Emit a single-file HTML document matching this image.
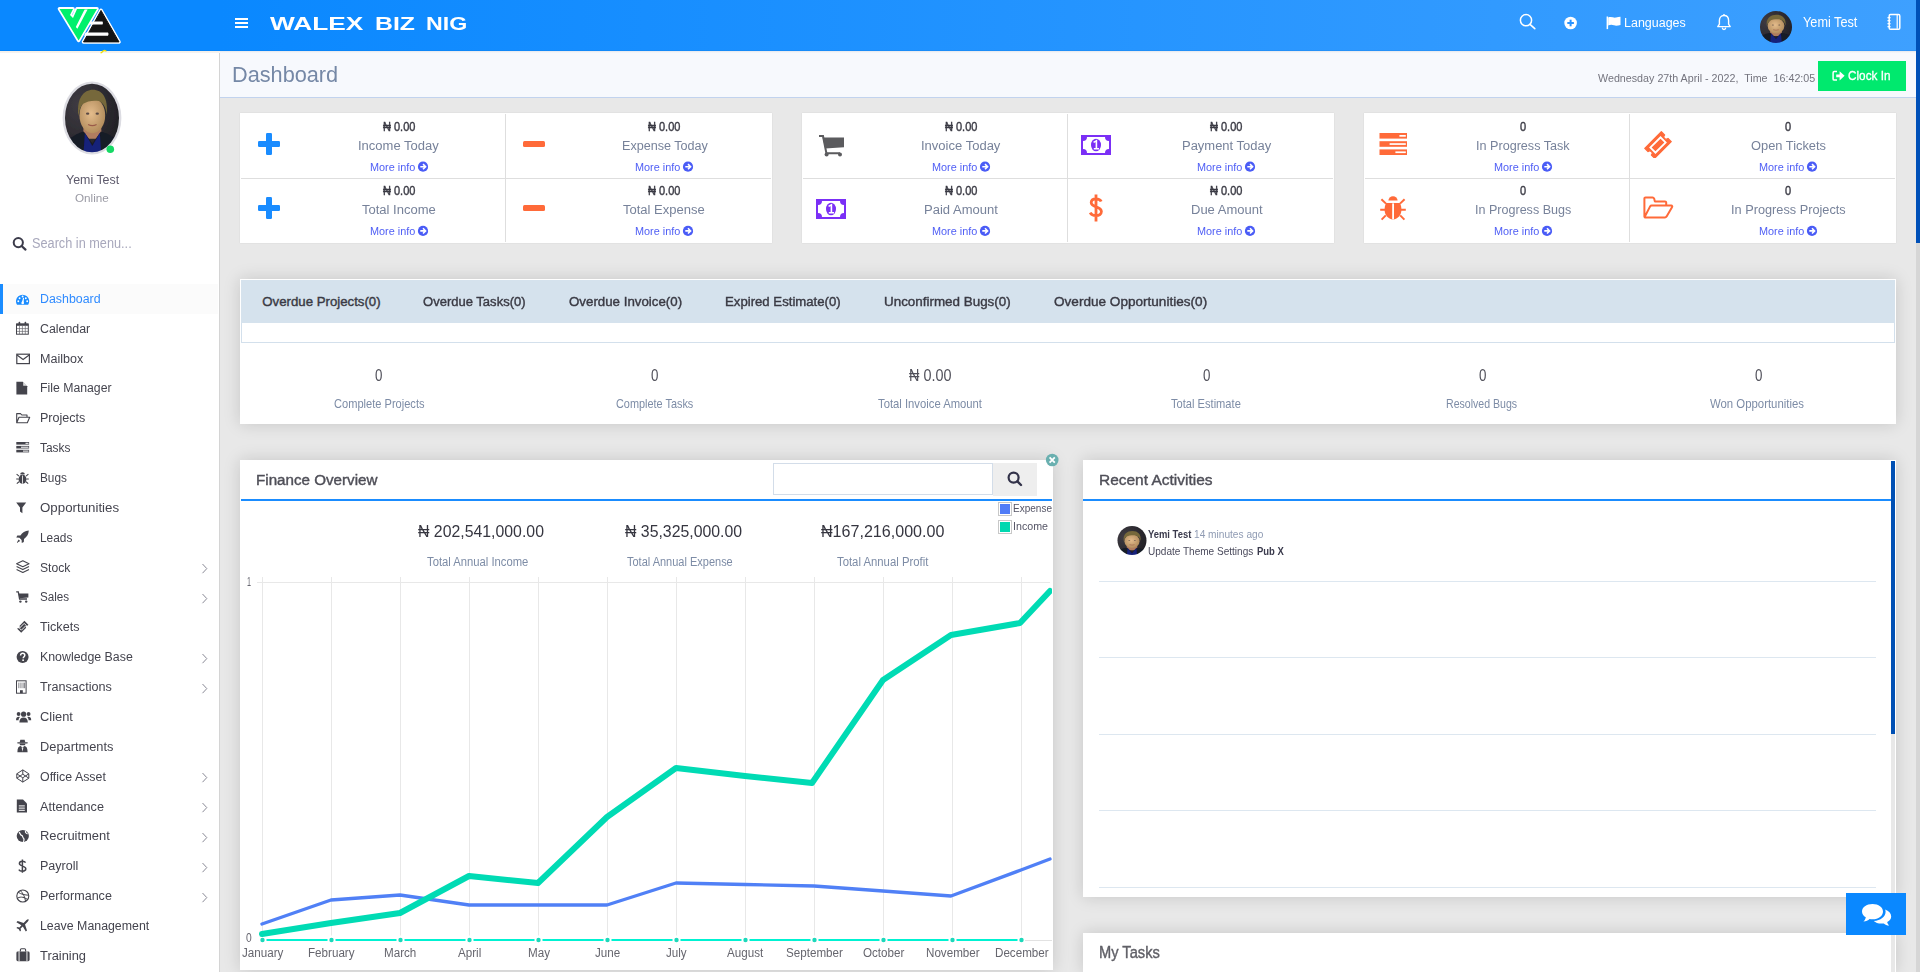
<!DOCTYPE html>
<html><head><meta charset="utf-8"><title>Dashboard</title>
<style>
html,body{margin:0;padding:0;width:1920px;height:972px;overflow:hidden;background:#e8e8e8;font-family:"Liberation Sans",sans-serif;}
.b{position:absolute;display:block}
.t{position:absolute;white-space:pre;line-height:1;transform-origin:0 0;font-family:"Liberation Sans",sans-serif}
</style></head><body>
<div class="b" style="left:220px;top:50px;width:1700px;height:922px;background:#e8e8e8"></div>
<div class="b" style="left:0px;top:51px;width:220px;height:921px;background:#fff;border-right:1px solid #d4d4d4;box-sizing:border-box"></div>
<svg class="b" style="left:60px;top:79px;" width="64" height="78" viewBox="0 0 64 78"><defs><clipPath id="av1"><ellipse cx="32" cy="39" rx="27" ry="34.3"/></clipPath></defs><ellipse cx="32" cy="39" rx="29.4" ry="36.5" fill="#dcdce2"/><g clip-path="url(#av1)"><g transform="translate(-1.9,-7.2) scale(1.07,1.196)"><defs><radialGradient id="bgav1" cx="30%" cy="35%" r="75%"><stop offset="0" stop-color="#3e3b42"/><stop offset="1" stop-color="#1c1b20"/></radialGradient>
<radialGradient id="face1" cx="45%" cy="45%" r="60%"><stop offset="0" stop-color="#e4bc8c"/><stop offset="1" stop-color="#b08a5a"/></radialGradient>
<filter id="bl1" x="-10%" y="-10%" width="120%" height="120%"><feGaussianBlur stdDeviation="0.55"/></filter></defs>
<g filter="url(#bl1)">
<rect x="0" y="0" width="64" height="78" fill="url(#bgav1)"/>
<path d="M24 44 L40 44 L41 56 L23 56 Z" fill="#b07c60"/>
<path d="M0 78 C2 60 12 53 24 50 L32 60 L40 50 C52 53 62 60 64 78 Z" fill="#191a26"/>
<path d="M25 51 L32 62 L39 51 L41 78 L23 78 Z" fill="#16207a"/>
<ellipse cx="32" cy="36.5" rx="12" ry="14.8" fill="url(#face1)"/>
<path d="M19 37 C17 22 24 15 32.5 15 C41.5 15 47 22 45.5 36 C44.5 29 42 26 38 24.4 C33 23.6 27 24.4 23 27 C21 29 19.8 32 19 37 Z" fill="#76683a"/>
<ellipse cx="27.6" cy="35" rx="1.6" ry="0.9" fill="#5a4a44"/><ellipse cx="36.6" cy="35" rx="1.6" ry="0.9" fill="#5a4a44"/>
<path d="M28 44 Q32 46 36 44" stroke="#9a5a4a" stroke-width="1" fill="none"/>
</g></g></g></svg>
<svg class="b" style="left:105px;top:144px;" width="11" height="11" viewBox="0 0 11 11"><circle cx="5.3" cy="5.3" r="3.8" fill="#16d965"/></svg>
<div class="t" style="left:65.70px;top:173.69px;font-size:12.06px;font-weight:400;color:#5d5a6c;transform:scaleX(1.0310);">Yemi Test</div>
<div class="t" style="left:75.40px;top:193.20px;font-size:11.34px;font-weight:400;color:#9a9aa4;transform:scaleX(1.0335);">Online</div>
<svg class="b" style="left:12px;top:236px;" width="16" height="16" viewBox="0 0 16 16"><circle cx="6.3" cy="6.6" r="4.6" fill="none" stroke="#3b3b4a" stroke-width="2"/><line x1="9.6" y1="10" x2="13.5" y2="13.6" stroke="#3b3b4a" stroke-width="2.2" stroke-linecap="round"/></svg>
<div class="t" style="left:31.50px;top:237.01px;font-size:13.81px;font-weight:400;color:#a8a8bc;transform:scaleX(0.9219);">Search in menu...</div>
<div class="b" style="left:0px;top:284px;width:218px;height:30px;background:#fbfbfb"></div>
<div class="b" style="left:0px;top:284px;width:3px;height:30px;background:#1a8cff"></div>
<div class="t" style="left:40.10px;top:291.83px;font-size:13.08px;font-weight:400;color:#2f8bff;transform:scaleX(0.9470);">Dashboard</div>
<svg class="b" style="left:16px;top:292px" width="16" height="15" viewBox="0 0 16 15"><path d="M1 12.8 A6.6 6.6 0 1 1 12.2 12.8 Z" fill="#1a8cff"/><g fill="#fff"><circle cx="3.6" cy="6.2" r="0.95"/><circle cx="6.6" cy="4.5" r="0.95"/><circle cx="9.8" cy="6.2" r="0.95"/><circle cx="2.3" cy="9.2" r="0.95"/><circle cx="11.2" cy="9.2" r="0.95"/><path d="M7.1 5.8 L8 5.9 L7.6 10.6 L5.8 10.6 Z"/><circle cx="6.7" cy="10.9" r="1.3"/></g></svg>
<div class="t" style="left:40.10px;top:321.69px;font-size:13.08px;font-weight:400;color:#44444e;transform:scaleX(0.9464);">Calendar</div>
<svg class="b" style="left:16px;top:321px" width="16" height="15" viewBox="0 0 16 15"><rect x="0.5" y="3" width="11.8" height="10.2" fill="none" stroke="#44444c" stroke-width="1"/><rect x="0.5" y="2.6" width="11.8" height="2.2" fill="#44444c"/><path d="M3.5 5 V13 M6.4 5 V13 M9.3 5 V13 M0.8 7.6 H12 M0.8 10.4 H12" stroke="#44444c" stroke-width="0.7" opacity="0.8"/><rect x="2.6" y="0.8" width="1.6" height="3" rx="0.6" fill="#44444c"/><rect x="8.6" y="0.8" width="1.6" height="3" rx="0.6" fill="#44444c"/></svg>
<div class="t" style="left:40.10px;top:351.55px;font-size:13.08px;font-weight:400;color:#44444e;transform:scaleX(0.9590);">Mailbox</div>
<svg class="b" style="left:16px;top:351px" width="16" height="15" viewBox="0 0 16 15"><rect x="0.8" y="3.2" width="12.6" height="9.4" fill="none" stroke="#44444c" stroke-width="1.2"/><path d="M1 4 L7.1 8.6 L13.2 4" fill="none" stroke="#44444c" stroke-width="1.2"/></svg>
<div class="t" style="left:40.10px;top:381.42px;font-size:13.08px;font-weight:400;color:#44444e;transform:scaleX(0.9379);">File Manager</div>
<svg class="b" style="left:16px;top:381px" width="16" height="15" viewBox="0 0 16 15"><path d="M0.4 0.8 H6.8 L11.2 5.2 V13.6 H0.4 Z" fill="#44444c"/><path d="M7.2 0.8 V4.8 H11.2" fill="#ddd"/></svg>
<div class="t" style="left:40.10px;top:411.28px;font-size:13.08px;font-weight:400;color:#44444e;transform:scaleX(0.9598);">Projects</div>
<svg class="b" style="left:16px;top:411px" width="16" height="15" viewBox="0 0 16 15"><path d="M0.7 11.8 V2.6 H4.5 L5.8 4 H11 V6 M0.7 11.8 L3 6.3 H13.7 L11.3 11.8 Z" fill="none" stroke="#44444c" stroke-width="1.1" stroke-linejoin="round"/></svg>
<div class="t" style="left:40.10px;top:441.14px;font-size:13.08px;font-weight:400;color:#44444e;transform:scaleX(0.9104);">Tasks</div>
<svg class="b" style="left:16px;top:441px" width="16" height="15" viewBox="0 0 16 15"><rect x="0.3" y="1" width="12.8" height="2.6" fill="#44444c"/><rect x="0.3" y="4.9" width="12.8" height="2.6" fill="#44444c"/><rect x="0.3" y="8.8" width="12.8" height="2.6" fill="#44444c"/><rect x="9.5" y="1.8" width="3" height="1" fill="#fff"/><rect x="5" y="5.7" width="7.5" height="1" fill="#fff"/><rect x="7" y="9.6" width="5.5" height="1" fill="#fff"/></svg>
<div class="t" style="left:40.10px;top:471.01px;font-size:13.08px;font-weight:400;color:#44444e;transform:scaleX(0.9012);">Bugs</div>
<svg class="b" style="left:16px;top:471px" width="16" height="15" viewBox="0 0 16 15"><path d="M4 3.2 A2.6 2.6 0 0 1 9 3.2 Z" fill="#44444c"/><ellipse cx="6.5" cy="8.2" rx="3.9" ry="4.6" fill="#44444c"/><path d="M0.6 3.2 L3 5.2 M12.4 3.2 L10 5.2 M0.2 8 H2.6 M12.8 8 H10.4 M0.8 12.6 L3 10.8 M12.2 12.6 L10 10.8" stroke="#44444c" stroke-width="1.1"/><rect x="6.1" y="4.6" width="0.8" height="8" fill="#fff"/></svg>
<div class="t" style="left:40.10px;top:500.87px;font-size:13.08px;font-weight:400;color:#44444e;transform:scaleX(1.0167);">Opportunities</div>
<svg class="b" style="left:16px;top:501px" width="16" height="15" viewBox="0 0 16 15"><path d="M0.2 1.6 H10.2 L6.4 6.4 V12.2 L4 10.4 V6.4 Z" fill="#44444c"/></svg>
<div class="t" style="left:40.10px;top:530.74px;font-size:13.08px;font-weight:400;color:#44444e;transform:scaleX(0.9076);">Leads</div>
<svg class="b" style="left:16px;top:530px" width="16" height="15" viewBox="0 0 16 15"><path d="M12.8 0.6 C9 0.8 6.3 2.6 4.4 5.4 L1.3 5.6 L0.3 7.6 L3.4 7.8 L5.6 10 L5.8 13 L7.8 12 L8 9 C10.8 7 12.6 4.4 12.8 0.6 Z" fill="#44444c"/><path d="M2.6 9.4 L0.6 13 L4.2 11" fill="#44444c"/></svg>
<div class="t" style="left:40.10px;top:560.60px;font-size:13.08px;font-weight:400;color:#44444e;transform:scaleX(0.9299);">Stock</div>
<svg class="b" style="left:16px;top:560px" width="16" height="15" viewBox="0 0 16 15"><path d="M6.8 0.8 L13 3.8 L6.8 6.8 L0.6 3.8 Z M0.6 6.6 L6.8 9.6 L13 6.6 M0.6 9.4 L6.8 12.4 L13 9.4" fill="none" stroke="#44444c" stroke-width="1.1" stroke-linejoin="round"/></svg>
<svg class="b" style="left:200px;top:561.2727272727273px;" width="10" height="16" viewBox="0 0 10 16"><polyline points="2.5,3 6.8,7.6 2.5,12.2" fill="none" stroke="#8a8a96" stroke-width="1"/></svg>
<div class="t" style="left:40.10px;top:590.46px;font-size:13.08px;font-weight:400;color:#44444e;transform:scaleX(0.8916);">Sales</div>
<svg class="b" style="left:16px;top:590px" width="16" height="15" viewBox="0 0 16 15"><path d="M0.2 1.8 H2.3 L3.6 9 H11" fill="none" stroke="#44444c" stroke-width="1.3"/><path d="M2.6 3.4 H12.4 V7.6 L3.4 8.2 Z" fill="#44444c"/><circle cx="4.4" cy="11.6" r="1.2" fill="#44444c"/><circle cx="10.2" cy="11.6" r="1.2" fill="#44444c"/></svg>
<svg class="b" style="left:200px;top:591.1363636363636px;" width="10" height="16" viewBox="0 0 10 16"><polyline points="2.5,3 6.8,7.6 2.5,12.2" fill="none" stroke="#8a8a96" stroke-width="1"/></svg>
<div class="t" style="left:40.10px;top:620.33px;font-size:13.08px;font-weight:400;color:#44444e;transform:scaleX(0.9634);">Tickets</div>
<svg class="b" style="left:16px;top:620px" width="16" height="15" viewBox="0 0 16 15"><path d="M8.4 0.8 L12.4 4.8 L11.6 5.8 C11 5.4 10.2 5.6 10 6.2 C9.6 6.8 9.8 7.4 10.2 7.8 L5.2 12.8 L1.2 8.8 L2 8 C2.6 8.4 3.4 8.2 3.6 7.6 C4 7 3.8 6.4 3.4 6 Z" fill="#44444c"/><path d="M8.2 3.4 L10.2 5.4 L5.4 10.2 L3.4 8.2 Z" fill="none" stroke="#fff" stroke-width="0.9"/></svg>
<div class="t" style="left:40.10px;top:650.19px;font-size:13.08px;font-weight:400;color:#44444e;transform:scaleX(0.9451);">Knowledge Base</div>
<svg class="b" style="left:16px;top:650px" width="16" height="15" viewBox="0 0 16 15"><circle cx="6.6" cy="7" r="6" fill="#44444c"/><path d="M4.6 5.4 C4.6 3.8 5.6 3.2 6.6 3.2 C7.8 3.2 8.8 4 8.8 5.2 C8.8 6.6 7.2 6.8 7.2 8.2" fill="none" stroke="#fff" stroke-width="1.5"/><rect x="6.3" y="9.4" width="1.6" height="1.6" fill="#fff"/></svg>
<svg class="b" style="left:200px;top:650.8636363636364px;" width="10" height="16" viewBox="0 0 10 16"><polyline points="2.5,3 6.8,7.6 2.5,12.2" fill="none" stroke="#8a8a96" stroke-width="1"/></svg>
<div class="t" style="left:40.10px;top:680.05px;font-size:13.08px;font-weight:400;color:#44444e;transform:scaleX(0.9664);">Transactions</div>
<svg class="b" style="left:16px;top:680px" width="16" height="15" viewBox="0 0 16 15"><rect x="0.5" y="0.8" width="9.6" height="12.4" fill="none" stroke="#44444c" stroke-width="1"/><g fill="#44444c" opacity="0.75"><rect x="2.4" y="2.6" width="0.9" height="5.6"/><rect x="4.5" y="2.6" width="0.9" height="5.6"/><rect x="6.6" y="2.6" width="0.9" height="5.6"/><rect x="8.2" y="2.6" width="0.9" height="5.6"/></g><rect x="4" y="10.2" width="2.8" height="3" fill="#44444c"/></svg>
<svg class="b" style="left:200px;top:680.7272727272727px;" width="10" height="16" viewBox="0 0 10 16"><polyline points="2.5,3 6.8,7.6 2.5,12.2" fill="none" stroke="#8a8a96" stroke-width="1"/></svg>
<div class="t" style="left:40.10px;top:709.92px;font-size:13.08px;font-weight:400;color:#44444e;transform:scaleX(0.9821);">Client</div>
<svg class="b" style="left:16px;top:710px" width="16" height="15" viewBox="0 0 16 15"><circle cx="7.6" cy="4.2" r="2.6" fill="#44444c"/><path d="M3.4 12.6 C3.4 9 5 7.4 7.6 7.4 C10.2 7.4 11.8 9 11.8 12.6 Z" fill="#44444c"/><circle cx="2.6" cy="4" r="1.9" fill="#44444c"/><circle cx="12.6" cy="4" r="1.9" fill="#44444c"/><path d="M0 10.2 C0 7.6 1 6.8 3 6.8 L4 7 C3 8 2.6 9 2.6 10.2 Z M15.2 10.2 C15.2 7.6 14.2 6.8 12.2 6.8 L11.2 7 C12.2 8 12.6 9 12.6 10.2 Z" fill="#44444c"/></svg>
<div class="t" style="left:40.10px;top:739.78px;font-size:13.08px;font-weight:400;color:#44444e;transform:scaleX(0.9800);">Departments</div>
<svg class="b" style="left:16px;top:739px" width="16" height="15" viewBox="0 0 16 15"><path d="M3.6 3.4 L4.4 0.8 H8.6 L9.4 3.4 Z" fill="#44444c"/><rect x="1.2" y="3.2" width="10.6" height="1.2" rx="0.6" fill="#44444c"/><path d="M3.6 4.4 H9.4 L9 6.2 H4 Z" fill="#44444c"/><path d="M1.4 13.2 C1.4 9 2.6 7 4.6 7 L6.5 8.6 L8.4 7 C10.4 7 11.6 9 11.6 13.2 Z" fill="#44444c"/><path d="M5.6 8.4 L6.5 12.8 L7.4 8.4" fill="#fff" opacity="0.9"/></svg>
<div class="t" style="left:40.10px;top:769.64px;font-size:13.08px;font-weight:400;color:#44444e;transform:scaleX(0.9476);">Office Asset</div>
<svg class="b" style="left:16px;top:769px" width="16" height="15" viewBox="0 0 16 15"><path d="M6.8 0.9 L12.8 4.8 V9.2 L6.8 13.1 L0.8 9.2 V4.8 Z M0.8 4.8 L6.8 8.8 L12.8 4.8 M0.8 9.2 L6.8 5.2 L12.8 9.2 M6.8 0.9 V5.2 M6.8 8.8 V13.1" fill="none" stroke="#44444c" stroke-width="1" stroke-linejoin="round"/></svg>
<svg class="b" style="left:200px;top:770.3181818181818px;" width="10" height="16" viewBox="0 0 10 16"><polyline points="2.5,3 6.8,7.6 2.5,12.2" fill="none" stroke="#8a8a96" stroke-width="1"/></svg>
<div class="t" style="left:40.10px;top:799.51px;font-size:13.08px;font-weight:400;color:#44444e;transform:scaleX(0.9668);">Attendance</div>
<svg class="b" style="left:16px;top:799px" width="16" height="15" viewBox="0 0 16 15"><path d="M0.8 0.6 H7 L11 4.6 V13.4 H0.8 Z" fill="#44444c"/><g fill="#fff"><rect x="2.8" y="6.4" width="6" height="1"/><rect x="2.8" y="8.6" width="6" height="1"/><rect x="2.8" y="10.8" width="6" height="1"/></g></svg>
<svg class="b" style="left:200px;top:800.1818181818182px;" width="10" height="16" viewBox="0 0 10 16"><polyline points="2.5,3 6.8,7.6 2.5,12.2" fill="none" stroke="#8a8a96" stroke-width="1"/></svg>
<div class="t" style="left:40.10px;top:829.37px;font-size:13.08px;font-weight:400;color:#44444e;transform:scaleX(0.9915);">Recruitment</div>
<svg class="b" style="left:16px;top:829px" width="16" height="15" viewBox="0 0 16 15"><circle cx="6.8" cy="7" r="6.1" fill="#44444c"/><path d="M3 3.2 C4.6 4.6 4 6 5.6 6.4 C7 6.8 6.4 8.6 7.8 9.6 C8.4 10.6 7.8 12 7.2 12.8 M9.6 2 C9 3.2 10 4.6 11.6 4.8" fill="none" stroke="#fff" stroke-width="1.2"/></svg>
<svg class="b" style="left:200px;top:830.0454545454545px;" width="10" height="16" viewBox="0 0 10 16"><polyline points="2.5,3 6.8,7.6 2.5,12.2" fill="none" stroke="#8a8a96" stroke-width="1"/></svg>
<div class="t" style="left:40.10px;top:859.24px;font-size:13.08px;font-weight:400;color:#44444e;transform:scaleX(0.9588);">Payroll</div>
<svg class="b" style="left:16px;top:859px" width="16" height="15" viewBox="0 0 16 15"><path d="M9.6 3.6 C9 2.6 8 2.2 6.4 2.2 C4.6 2.2 3.4 3.2 3.4 4.6 C3.4 7.8 9.8 6.4 9.8 9.8 C9.8 11.2 8.4 12.2 6.4 12.2 C4.6 12.2 3.4 11.6 2.8 10.6 M6.4 0.6 V13.8" fill="none" stroke="#44444c" stroke-width="1.5"/></svg>
<svg class="b" style="left:200px;top:859.9090909090909px;" width="10" height="16" viewBox="0 0 10 16"><polyline points="2.5,3 6.8,7.6 2.5,12.2" fill="none" stroke="#8a8a96" stroke-width="1"/></svg>
<div class="t" style="left:40.10px;top:889.10px;font-size:13.08px;font-weight:400;color:#44444e;transform:scaleX(0.9600);">Performance</div>
<svg class="b" style="left:16px;top:889px" width="16" height="15" viewBox="0 0 16 15"><circle cx="6.8" cy="7" r="6" fill="none" stroke="#44444c" stroke-width="1.1"/><path d="M2 3 C5 5.5 9 6 12.8 6.2 M4.2 1.5 C7 4 9 8 9.6 12.6 M1 9.6 C3.4 7.6 7 7.4 11.8 10.6" fill="none" stroke="#44444c" stroke-width="1"/></svg>
<svg class="b" style="left:200px;top:889.7727272727273px;" width="10" height="16" viewBox="0 0 10 16"><polyline points="2.5,3 6.8,7.6 2.5,12.2" fill="none" stroke="#8a8a96" stroke-width="1"/></svg>
<div class="t" style="left:40.10px;top:918.96px;font-size:13.08px;font-weight:400;color:#44444e;transform:scaleX(0.9447);">Leave Management</div>
<svg class="b" style="left:16px;top:919px" width="16" height="15" viewBox="0 0 16 15"><path d="M12.6 0.4 C11.8 0.2 10.8 0.8 9.8 1.8 L7.6 4 L1.6 2 L0.4 3.2 L5.4 6.2 L3.4 8.4 L1.4 8 L0.4 9 L2.8 10.2 L4 12.6 L5 11.6 L4.6 9.6 L6.8 7.6 L9.8 12.6 L11 11.4 L9 5.4 L11.2 3.2 C12.2 2.2 12.8 1.2 12.6 0.4 Z" fill="#44444c"/></svg>
<div class="t" style="left:40.10px;top:948.83px;font-size:13.08px;font-weight:400;color:#44444e;transform:scaleX(0.9840);">Training</div>
<svg class="b" style="left:16px;top:948px" width="16" height="15" viewBox="0 0 16 15"><rect x="0.4" y="3.6" width="13.2" height="9.6" rx="1.4" fill="#44444c"/><path d="M4.4 3.6 V1.8 C4.4 1.2 4.8 0.8 5.4 0.8 H8.6 C9.2 0.8 9.6 1.2 9.6 1.8 V3.6" fill="none" stroke="#44444c" stroke-width="1.1"/><rect x="2.6" y="3.6" width="0.9" height="9.6" fill="#fff"/><rect x="10.5" y="3.6" width="0.9" height="9.6" fill="#fff"/></svg>
<div class="b" style="left:0px;top:0px;width:220px;height:51px;background:#0a88ff"></div>
<div class="b" style="left:220px;top:0px;width:1700px;height:51px;background:linear-gradient(90deg,#0a88ff 0%,#3ea0ff 100%)"></div>
<div class="b" style="left:0px;top:50px;width:1920px;height:1px;background:linear-gradient(90deg,#0282f8 0%,#3598f8 100%)"></div>
<div class="b" style="left:0px;top:51px;width:220px;height:2px;background:linear-gradient(#f6efe6,#f4f4f4)"></div>
<div class="b" style="left:220px;top:51px;width:1700px;height:1px;background:rgba(120,90,40,.08)"></div>
<svg class="b" style="left:55px;top:5px;" width="70" height="42" viewBox="0 0 70 42"><g transform="translate(0,-0.6)">
<g stroke="#fff" stroke-width="3.6" stroke-linejoin="round" fill="none">
<path d="M46 6 L64 37.5 L28.5 37.5 Z"/>
<path d="M4.5 4.5 L18 4.5 L15 10.5 L18 13.5 L22 4.5 L42 4.5 L23.6 36 Z"/>
</g>
<path d="M46 6 L64 37.5 L28.5 37.5 Z" fill="#141414" stroke="#141414" stroke-width="1" stroke-linejoin="round"/>
<path d="M36 17 L47.5 17 Q48.5 18.5 47.5 20 L34.4 20 Z M30.5 28.2 L53 28.2 Q54.2 29.8 53 31.4 L29 31.4 Z" fill="#fff"/>
<path d="M4.5 4.5 L18 4.5 L15 10.5 L18 13.5 L22 4.5 L42 4.5 L23.6 36 Z" fill="#00f06c"/>
<path d="M29.6 5 L32.6 5 L22.4 24.4 L20.8 22.6 Z" fill="#fff"/>
</g></svg>
<div class="b" style="left:235px;top:18px;width:13px;height:2px;background:#fff"></div>
<div class="b" style="left:235px;top:22px;width:13px;height:2px;background:#fff"></div>
<div class="b" style="left:235px;top:26px;width:13px;height:2px;background:#fff"></div>
<div class="t" style="left:270.10px;top:13.86px;font-size:19.19px;font-weight:700;color:#fff;transform:scaleX(1.3685);">WALEX</div>
<div class="t" style="left:375.00px;top:13.86px;font-size:19.19px;font-weight:700;color:#fff;transform:scaleX(1.2924);">BIZ</div>
<div class="t" style="left:425.80px;top:13.86px;font-size:19.19px;font-weight:700;color:#fff;transform:scaleX(1.2094);">NIG</div>
<svg class="b" style="left:1518px;top:13px;" width="20" height="18" viewBox="0 0 20 18"><circle cx="8" cy="7.2" r="5.6" fill="none" stroke="#fff" stroke-width="1.5"/><line x1="12" y1="11.3" x2="16.8" y2="15.6" stroke="#fff" stroke-width="1.6" stroke-linecap="round"/></svg>
<svg class="b" style="left:1563px;top:16px;" width="16" height="15" viewBox="0 0 16 15"><circle cx="7.6" cy="7" r="6.3" fill="#fff"/><rect x="4.3" y="6" width="6.6" height="2" fill="#2a93ff"/><rect x="6.6" y="3.7" width="2" height="6.6" fill="#2a93ff"/></svg>
<svg class="b" style="left:1606px;top:16px;" width="16" height="14" viewBox="0 0 16 14"><rect x="0.6" y="0.5" width="1.5" height="12.6" fill="#fff"/><path d="M2.2 1.6 C5 0.2 7.5 2.2 10 1.6 C11.5 1.3 13 0.8 14.5 0.8 L14.5 9 C12 9.5 10 10 8 9.3 C6 8.6 4 8.6 2.2 9.6 Z" fill="#fff"/></svg>
<div class="t" style="left:1624.30px;top:16.43px;font-size:13.08px;font-weight:400;color:#fff;transform:scaleX(0.9545);">Languages</div>
<svg class="b" style="left:1715px;top:13px;" width="18" height="18" viewBox="0 0 18 18"><path d="M9 2.5 C5.8 2.5 4.4 5 4.4 7.6 L4.4 11.2 L2.8 13.6 L15.2 13.6 L13.6 11.2 L13.6 7.6 C13.6 5 12.2 2.5 9 2.5 Z" fill="none" stroke="#fff" stroke-width="1.4" stroke-linejoin="round"/><path d="M7.2 14.6 C7.4 16 8.2 16.5 9 16.5 C9.8 16.5 10.6 16 10.8 14.6" fill="none" stroke="#fff" stroke-width="1.3"/><circle cx="9" cy="1.9" r="0.9" fill="#fff"/></svg>
<svg class="b" style="left:1759px;top:10px;" width="34" height="34" viewBox="0 0 34 34"><defs><clipPath id="av2"><circle cx="17" cy="17" r="16"/></clipPath></defs><g clip-path="url(#av2)"><g transform="translate(-5.4,-3.16) scale(0.7,0.52)"><defs><radialGradient id="bgav2" cx="30%" cy="35%" r="75%"><stop offset="0" stop-color="#3e3b42"/><stop offset="1" stop-color="#1c1b20"/></radialGradient>
<radialGradient id="face2" cx="45%" cy="45%" r="60%"><stop offset="0" stop-color="#e4bc8c"/><stop offset="1" stop-color="#b08a5a"/></radialGradient>
<filter id="bl2" x="-10%" y="-10%" width="120%" height="120%"><feGaussianBlur stdDeviation="0.55"/></filter></defs>
<g filter="url(#bl2)">
<rect x="0" y="0" width="64" height="78" fill="url(#bgav2)"/>
<path d="M24 44 L40 44 L41 56 L23 56 Z" fill="#b07c60"/>
<path d="M0 78 C2 60 12 53 24 50 L32 60 L40 50 C52 53 62 60 64 78 Z" fill="#191a26"/>
<path d="M25 51 L32 62 L39 51 L41 78 L23 78 Z" fill="#16207a"/>
<ellipse cx="32" cy="36.5" rx="12" ry="14.8" fill="url(#face2)"/>
<path d="M19 37 C17 22 24 15 32.5 15 C41.5 15 47 22 45.5 36 C44.5 29 42 26 38 24.4 C33 23.6 27 24.4 23 27 C21 29 19.8 32 19 37 Z" fill="#76683a"/>
<ellipse cx="27.6" cy="35" rx="1.6" ry="0.9" fill="#5a4a44"/><ellipse cx="36.6" cy="35" rx="1.6" ry="0.9" fill="#5a4a44"/>
<path d="M28 44 Q32 46 36 44" stroke="#9a5a4a" stroke-width="1" fill="none"/>
</g></g></g></svg>
<div class="t" style="left:1802.60px;top:16.11px;font-size:13.81px;font-weight:400;color:#fff;transform:scaleX(0.9213);">Yemi Test</div>
<svg class="b" style="left:1886px;top:13px;" width="16" height="18" viewBox="0 0 16 18"><rect x="3.2" y="1.6" width="10.6" height="14.6" rx="1.3" fill="none" stroke="#fff" stroke-width="1.5"/><line x1="11.2" y1="2" x2="11.2" y2="15.8" stroke="#fff" stroke-width="1.2"/><g fill="#fff"><rect x="1.5" y="4" width="3" height="1.3"/><rect x="1.5" y="7" width="3" height="1.3"/><rect x="1.5" y="10" width="3" height="1.3"/><rect x="1.5" y="13" width="3" height="1.3"/></g></svg>
<div class="b" style="left:220px;top:51px;width:1700px;height:47px;background:#f7f9fd;border-bottom:1px solid #c2d3ee;box-sizing:border-box"></div>
<div class="b" style="left:220px;top:51px;width:1700px;height:2px;background:linear-gradient(#e6e7ec,#f7f9fd)"></div>
<div class="t" style="left:231.70px;top:63.01px;font-size:22.67px;font-weight:400;color:#7588a6;transform:scaleX(0.9576);">Dashboard</div>
<div class="t" style="left:1597.50px;top:72.93px;font-size:11.19px;font-weight:400;color:#74747e;transform:scaleX(0.9579);">Wednesday 27th April - 2022,  Time  16:42:05</div>
<div class="b" style="left:1818px;top:61px;width:88px;height:30px;background:#00e96e"></div>
<svg class="b" style="left:1831px;top:69px;" width="16" height="13" viewBox="0 0 16 13"><path d="M6 2.6 H3.2 C2.5 2.6 2.1 3 2.1 3.7 V9.9 C2.1 10.6 2.5 11 3.2 11 H6" fill="none" stroke="#fff" stroke-width="1.5"/><path d="M5.2 5.4 H8.6 V2.2 L13.6 6.8 L8.6 11.4 V8.2 H5.2 Z" fill="#fff"/></svg>
<div class="t" style="left:1848.30px;top:69.50px;font-size:12.65px;font-weight:400;color:#fff;transform:scaleX(0.9300);-webkit-text-stroke:0.3px #fff">Clock In</div>
<div class="b" style="left:240px;top:113px;width:532px;height:130px;background:#fff;box-shadow:0 0 1.5px rgba(0,0,0,.1)"></div>
<div class="b" style="left:505px;top:114px;width:1px;height:128px;background:#dedede"></div>
<div class="b" style="left:241px;top:178px;width:530px;height:1px;background:#dedede"></div>
<svg class="b" style="left:258px;top:133px" width="22" height="22" viewBox="0 0 22 22"><rect x="8" y="0" width="6" height="22" rx="1.2" fill="#1a8cff"/><rect x="0" y="8" width="22" height="6" rx="1.2" fill="#1a8cff"/></svg>
<div class="t" style="left:382.59px;top:120.52px;font-size:12.50px;font-weight:400;color:#3a3a44;transform:scaleX(0.8800);-webkit-text-stroke:0.4px currentColor">₦ 0.00</div>
<div class="t" style="left:358.30px;top:139.10px;font-size:13.23px;font-weight:400;color:#77829a;transform:scaleX(0.9848);">Income Today</div>
<div class="t" style="left:369.60px;top:161.80px;font-size:11.34px;font-weight:400;color:#4f5ef5;transform:scaleX(0.9598);">More info</div>
<svg class="b" style="left:417px;top:161px;" width="12" height="12" viewBox="0 0 12 12"><circle cx="6.00" cy="5.70" r="5.1" fill="#4a5cf6"/><path d="M3.30 5.70 h5 M6.00 3.10 l2.6 2.6 l-2.6 2.6" stroke="#fff" stroke-width="1.6" fill="none"/></svg>
<svg class="b" style="left:523px;top:140px" width="22" height="8" viewBox="0 0 22 8"><rect x="0" y="1" width="22" height="6" rx="1.5" fill="#ff6a39"/></svg>
<div class="t" style="left:647.59px;top:120.52px;font-size:12.50px;font-weight:400;color:#3a3a44;transform:scaleX(0.8800);-webkit-text-stroke:0.4px currentColor">₦ 0.00</div>
<div class="t" style="left:621.50px;top:139.10px;font-size:13.23px;font-weight:400;color:#77829a;transform:scaleX(0.9530);">Expense Today</div>
<div class="t" style="left:634.60px;top:161.80px;font-size:11.34px;font-weight:400;color:#4f5ef5;transform:scaleX(0.9598);">More info</div>
<svg class="b" style="left:682px;top:161px;" width="12" height="12" viewBox="0 0 12 12"><circle cx="6.00" cy="5.70" r="5.1" fill="#4a5cf6"/><path d="M3.30 5.70 h5 M6.00 3.10 l2.6 2.6 l-2.6 2.6" stroke="#fff" stroke-width="1.6" fill="none"/></svg>
<svg class="b" style="left:258px;top:197.2px" width="22" height="22" viewBox="0 0 22 22"><rect x="8" y="0" width="6" height="22" rx="1.2" fill="#1a8cff"/><rect x="0" y="8" width="22" height="6" rx="1.2" fill="#1a8cff"/></svg>
<div class="t" style="left:382.59px;top:185.22px;font-size:12.50px;font-weight:400;color:#3a3a44;transform:scaleX(0.8800);-webkit-text-stroke:0.4px currentColor">₦ 0.00</div>
<div class="t" style="left:361.81px;top:202.60px;font-size:13.23px;font-weight:400;color:#77829a;transform:scaleX(0.9850);">Total Income</div>
<div class="t" style="left:369.60px;top:225.70px;font-size:11.34px;font-weight:400;color:#4f5ef5;transform:scaleX(0.9598);">More info</div>
<svg class="b" style="left:417px;top:225px;" width="12" height="12" viewBox="0 0 12 12"><circle cx="6.00" cy="5.90" r="5.1" fill="#4a5cf6"/><path d="M3.30 5.90 h5 M6.00 3.30 l2.6 2.6 l-2.6 2.6" stroke="#fff" stroke-width="1.6" fill="none"/></svg>
<svg class="b" style="left:523px;top:204.2px" width="22" height="8" viewBox="0 0 22 8"><rect x="0" y="1" width="22" height="6" rx="1.5" fill="#ff6a39"/></svg>
<div class="t" style="left:647.59px;top:185.22px;font-size:12.50px;font-weight:400;color:#3a3a44;transform:scaleX(0.8800);-webkit-text-stroke:0.4px currentColor">₦ 0.00</div>
<div class="t" style="left:622.80px;top:202.60px;font-size:13.23px;font-weight:400;color:#77829a;transform:scaleX(0.9850);">Total Expense</div>
<div class="t" style="left:634.60px;top:225.70px;font-size:11.34px;font-weight:400;color:#4f5ef5;transform:scaleX(0.9598);">More info</div>
<svg class="b" style="left:682px;top:225px;" width="12" height="12" viewBox="0 0 12 12"><circle cx="6.00" cy="5.90" r="5.1" fill="#4a5cf6"/><path d="M3.30 5.90 h5 M6.00 3.30 l2.6 2.6 l-2.6 2.6" stroke="#fff" stroke-width="1.6" fill="none"/></svg>
<div class="b" style="left:802px;top:113px;width:532px;height:130px;background:#fff;box-shadow:0 0 1.5px rgba(0,0,0,.1)"></div>
<div class="b" style="left:1067px;top:114px;width:1px;height:128px;background:#dedede"></div>
<div class="b" style="left:803px;top:178px;width:530px;height:1px;background:#dedede"></div>
<svg class="b" style="left:818px;top:134px" width="28" height="24" viewBox="0 0 28 24"><path d="M1 2 H5 L8.4 19.2 H22" fill="none" stroke="#5b5b5e" stroke-width="2"/><path d="M4.6 3.4 H26 V13.2 L7.2 14.6 Z" fill="#5b5b5e"/><circle cx="8.6" cy="20.6" r="2" fill="#5b5b5e"/><circle cx="22" cy="20.6" r="2" fill="#5b5b5e"/></svg>
<div class="t" style="left:944.59px;top:120.52px;font-size:12.50px;font-weight:400;color:#3a3a44;transform:scaleX(0.8800);-webkit-text-stroke:0.4px currentColor">₦ 0.00</div>
<div class="t" style="left:921.01px;top:139.10px;font-size:13.23px;font-weight:400;color:#77829a;transform:scaleX(0.9850);">Invoice Today</div>
<div class="t" style="left:931.60px;top:161.80px;font-size:11.34px;font-weight:400;color:#4f5ef5;transform:scaleX(0.9598);">More info</div>
<svg class="b" style="left:979px;top:161px;" width="12" height="12" viewBox="0 0 12 12"><circle cx="6.00" cy="5.70" r="5.1" fill="#4a5cf6"/><path d="M3.30 5.70 h5 M6.00 3.10 l2.6 2.6 l-2.6 2.6" stroke="#fff" stroke-width="1.6" fill="none"/></svg>
<svg class="b" style="left:1081px;top:135px" width="30" height="20" viewBox="0 0 30 20"><rect x="0" y="0" width="30" height="20" fill="#7b2ff6"/><path d="M6 2 H24 A4 4 0 0 0 28 6 V14 A4 4 0 0 0 24 18 H6 A4 4 0 0 0 2 14 V6 A4 4 0 0 0 6 2 Z" fill="#fff"/><ellipse cx="15" cy="10" rx="5" ry="6.3" fill="#7b2ff6"/><path d="M12.6 7.4 L15.4 5.8 V13.6 M12.8 13.8 H18" stroke="#fff" stroke-width="1.6" fill="none"/></svg>
<div class="t" style="left:1209.59px;top:120.52px;font-size:12.50px;font-weight:400;color:#3a3a44;transform:scaleX(0.8800);-webkit-text-stroke:0.4px currentColor">₦ 0.00</div>
<div class="t" style="left:1181.70px;top:139.10px;font-size:13.23px;font-weight:400;color:#77829a;transform:scaleX(0.9813);">Payment Today</div>
<div class="t" style="left:1196.60px;top:161.80px;font-size:11.34px;font-weight:400;color:#4f5ef5;transform:scaleX(0.9598);">More info</div>
<svg class="b" style="left:1244px;top:161px;" width="12" height="12" viewBox="0 0 12 12"><circle cx="6.00" cy="5.70" r="5.1" fill="#4a5cf6"/><path d="M3.30 5.70 h5 M6.00 3.10 l2.6 2.6 l-2.6 2.6" stroke="#fff" stroke-width="1.6" fill="none"/></svg>
<svg class="b" style="left:816px;top:199.2px" width="30" height="20" viewBox="0 0 30 20"><rect x="0" y="0" width="30" height="20" fill="#7b2ff6"/><path d="M6 2 H24 A4 4 0 0 0 28 6 V14 A4 4 0 0 0 24 18 H6 A4 4 0 0 0 2 14 V6 A4 4 0 0 0 6 2 Z" fill="#fff"/><ellipse cx="15" cy="10" rx="5" ry="6.3" fill="#7b2ff6"/><path d="M12.6 7.4 L15.4 5.8 V13.6 M12.8 13.8 H18" stroke="#fff" stroke-width="1.6" fill="none"/></svg>
<div class="t" style="left:944.59px;top:185.22px;font-size:12.50px;font-weight:400;color:#3a3a44;transform:scaleX(0.8800);-webkit-text-stroke:0.4px currentColor">₦ 0.00</div>
<div class="t" style="left:923.79px;top:202.60px;font-size:13.23px;font-weight:400;color:#77829a;transform:scaleX(0.9850);">Paid Amount</div>
<div class="t" style="left:931.60px;top:225.70px;font-size:11.34px;font-weight:400;color:#4f5ef5;transform:scaleX(0.9598);">More info</div>
<svg class="b" style="left:979px;top:225px;" width="12" height="12" viewBox="0 0 12 12"><circle cx="6.00" cy="5.90" r="5.1" fill="#4a5cf6"/><path d="M3.30 5.90 h5 M6.00 3.30 l2.6 2.6 l-2.6 2.6" stroke="#fff" stroke-width="1.6" fill="none"/></svg>
<svg class="b" style="left:1087px;top:193.2px" width="18" height="30" viewBox="0 0 18 30"><path d="M14.2 8.6 C13.4 6.6 11.6 5.8 9 5.8 C6 5.8 4.2 7.4 4.2 9.6 C4.2 15 14.4 12.6 14.4 18.6 C14.4 21 12.2 22.6 9 22.6 C6.2 22.6 4.2 21.6 3.2 19.6 M9 1.4 V28.4" fill="none" stroke="#ff6a39" stroke-width="2.8"/></svg>
<div class="t" style="left:1209.59px;top:185.22px;font-size:12.50px;font-weight:400;color:#3a3a44;transform:scaleX(0.8800);-webkit-text-stroke:0.4px currentColor">₦ 0.00</div>
<div class="t" style="left:1190.70px;top:202.60px;font-size:13.23px;font-weight:400;color:#77829a;transform:scaleX(0.9835);">Due Amount</div>
<div class="t" style="left:1196.60px;top:225.70px;font-size:11.34px;font-weight:400;color:#4f5ef5;transform:scaleX(0.9598);">More info</div>
<svg class="b" style="left:1244px;top:225px;" width="12" height="12" viewBox="0 0 12 12"><circle cx="6.00" cy="5.90" r="5.1" fill="#4a5cf6"/><path d="M3.30 5.90 h5 M6.00 3.30 l2.6 2.6 l-2.6 2.6" stroke="#fff" stroke-width="1.6" fill="none"/></svg>
<div class="b" style="left:1364px;top:113px;width:532px;height:130px;background:#fff;box-shadow:0 0 1.5px rgba(0,0,0,.1)"></div>
<div class="b" style="left:1629px;top:114px;width:1px;height:128px;background:#dedede"></div>
<div class="b" style="left:1365px;top:178px;width:530px;height:1px;background:#dedede"></div>
<svg class="b" style="left:1379px;top:132px" width="28" height="24" viewBox="0 0 28 24"><rect x="0.5" y="1" width="28" height="5.6" fill="#ff6a39"/><rect x="0.5" y="9.2" width="28" height="5.6" fill="#ff6a39"/><rect x="0.5" y="17.4" width="28" height="5.6" fill="#ff6a39"/><rect x="20.4" y="3" width="6.4" height="1.7" fill="#fff"/><rect x="10.6" y="11.2" width="16.2" height="1.7" fill="#fff"/><rect x="16.4" y="19.4" width="10.4" height="1.7" fill="#fff"/></svg>
<div class="t" style="left:1519.74px;top:120.52px;font-size:12.50px;font-weight:400;color:#3a3a44;transform:scaleX(0.8800);-webkit-text-stroke:0.4px currentColor">0</div>
<div class="t" style="left:1476.00px;top:139.10px;font-size:13.23px;font-weight:400;color:#77829a;transform:scaleX(0.9538);">In Progress Task</div>
<div class="t" style="left:1493.60px;top:161.80px;font-size:11.34px;font-weight:400;color:#4f5ef5;transform:scaleX(0.9598);">More info</div>
<svg class="b" style="left:1541px;top:161px;" width="12" height="12" viewBox="0 0 12 12"><circle cx="6.00" cy="5.70" r="5.1" fill="#4a5cf6"/><path d="M3.30 5.70 h5 M6.00 3.10 l2.6 2.6 l-2.6 2.6" stroke="#fff" stroke-width="1.6" fill="none"/></svg>
<svg class="b" style="left:1643px;top:128px" width="30" height="30" viewBox="0 0 30 30"><g transform="translate(15,17) rotate(-45)"><path d="M-11.75 -7 H11.75 V-2.4 A2.4 2.4 0 0 0 11.75 2.4 V7 H-11.75 V2.4 A2.4 2.4 0 0 0 -11.75 -2.4 Z" fill="#ff6a39" stroke="#ff6a39" stroke-width="1.2" stroke-linejoin="round"/><rect x="-7.2" y="-3.6" width="14.4" height="7.2" fill="#ff6a39" stroke="#fff" stroke-width="1.8"/></g></svg>
<div class="t" style="left:1784.74px;top:120.52px;font-size:12.50px;font-weight:400;color:#3a3a44;transform:scaleX(0.8800);-webkit-text-stroke:0.4px currentColor">0</div>
<div class="t" style="left:1750.70px;top:139.10px;font-size:13.23px;font-weight:400;color:#77829a;transform:scaleX(0.9722);">Open Tickets</div>
<div class="t" style="left:1758.60px;top:161.80px;font-size:11.34px;font-weight:400;color:#4f5ef5;transform:scaleX(0.9598);">More info</div>
<svg class="b" style="left:1806px;top:161px;" width="12" height="12" viewBox="0 0 12 12"><circle cx="6.00" cy="5.70" r="5.1" fill="#4a5cf6"/><path d="M3.30 5.70 h5 M6.00 3.10 l2.6 2.6 l-2.6 2.6" stroke="#fff" stroke-width="1.6" fill="none"/></svg>
<svg class="b" style="left:1380px;top:195.2px" width="26" height="26" viewBox="0 0 26 26"><path d="M8.4 5.6 A4.6 4.4 0 0 1 17.6 5.6 Z" fill="#ff6a39"/><path d="M6.2 8 H19.8 C21 10 21.4 12 21.4 15 C21.4 20 18 24 13 24.6 C8 24 4.6 20 4.6 15 C4.6 12 5 10 6.2 8 Z" fill="#ff6a39"/><rect x="12.2" y="8.4" width="1.8" height="16" fill="#fff"/><path d="M1.4 4.2 L6 8.6 M24.6 4.2 L20 8.6 M0.2 14.8 H5 M25.8 14.8 H21 M1.6 24.6 L5.8 20.4 M24.4 24.6 L20.2 20.4" stroke="#ff6a39" stroke-width="2"/></svg>
<div class="t" style="left:1519.74px;top:185.22px;font-size:12.50px;font-weight:400;color:#3a3a44;transform:scaleX(0.8800);-webkit-text-stroke:0.4px currentColor">0</div>
<div class="t" style="left:1474.70px;top:202.60px;font-size:13.23px;font-weight:400;color:#77829a;transform:scaleX(0.9493);">In Progress Bugs</div>
<div class="t" style="left:1493.60px;top:225.70px;font-size:11.34px;font-weight:400;color:#4f5ef5;transform:scaleX(0.9598);">More info</div>
<svg class="b" style="left:1541px;top:225px;" width="12" height="12" viewBox="0 0 12 12"><circle cx="6.00" cy="5.90" r="5.1" fill="#4a5cf6"/><path d="M3.30 5.90 h5 M6.00 3.30 l2.6 2.6 l-2.6 2.6" stroke="#fff" stroke-width="1.6" fill="none"/></svg>
<svg class="b" style="left:1643px;top:196.2px" width="32" height="24" viewBox="0 0 32 24"><path d="M1.4 20.6 V2.6 C1.4 1.8 1.8 1.4 2.6 1.4 H9.6 C10.4 1.4 10.8 1.8 11.2 2.6 L11.8 5.4 H22 C22.8 5.4 23.2 5.8 23.2 6.6 V9.6 M1.6 21 L7 10.6 C7.4 10 7.8 9.6 8.6 9.6 H28.2 C29.2 9.6 29.6 10.4 29 11.2 L23.6 20.4 C23.2 21 22.8 21.4 22 21.4 H2.6 C1.8 21.4 1.4 21 1.4 20.4" fill="none" stroke="#ff6a39" stroke-width="2" stroke-linejoin="round"/></svg>
<div class="t" style="left:1784.74px;top:185.22px;font-size:12.50px;font-weight:400;color:#3a3a44;transform:scaleX(0.8800);-webkit-text-stroke:0.4px currentColor">0</div>
<div class="t" style="left:1730.70px;top:202.60px;font-size:13.23px;font-weight:400;color:#77829a;transform:scaleX(0.9640);">In Progress Projects</div>
<div class="t" style="left:1758.60px;top:225.70px;font-size:11.34px;font-weight:400;color:#4f5ef5;transform:scaleX(0.9598);">More info</div>
<svg class="b" style="left:1806px;top:225px;" width="12" height="12" viewBox="0 0 12 12"><circle cx="6.00" cy="5.90" r="5.1" fill="#4a5cf6"/><path d="M3.30 5.90 h5 M6.00 3.30 l2.6 2.6 l-2.6 2.6" stroke="#fff" stroke-width="1.6" fill="none"/></svg>
<div class="b" style="left:240px;top:279px;width:1656px;height:145px;background:#fff;box-shadow:0 0 16px rgba(0,0,0,.15)"></div>
<div class="b" style="left:241px;top:280px;width:1654px;height:43px;background:#d5e2ed"></div>
<div class="b" style="left:241px;top:322px;width:988px;height:1px;background:#d5e2ed"></div>
<div class="b" style="left:241px;top:323px;width:1654px;height:20px;background:#fff;border:1px solid #d3e0ec;border-top:none;box-sizing:border-box"></div>
<div class="t" style="left:262.30px;top:294.60px;font-size:13.23px;font-weight:400;color:#3a3a44;-webkit-text-stroke:0.4px currentColor">Overdue Projects(0)</div>
<div class="t" style="left:423.40px;top:294.60px;font-size:13.23px;font-weight:400;color:#3a3a44;transform:scaleX(0.9856);-webkit-text-stroke:0.4px currentColor">Overdue Tasks(0)</div>
<div class="t" style="left:569.00px;top:294.60px;font-size:13.23px;font-weight:400;color:#3a3a44;transform:scaleX(1.0062);-webkit-text-stroke:0.4px currentColor">Overdue Invoice(0)</div>
<div class="t" style="left:725.20px;top:294.60px;font-size:13.23px;font-weight:400;color:#3a3a44;transform:scaleX(0.9970);-webkit-text-stroke:0.4px currentColor">Expired Estimate(0)</div>
<div class="t" style="left:884.00px;top:294.60px;font-size:13.23px;font-weight:400;color:#3a3a44;transform:scaleX(1.0144);-webkit-text-stroke:0.4px currentColor">Unconfirmed Bugs(0)</div>
<div class="t" style="left:1053.50px;top:294.60px;font-size:13.23px;font-weight:400;color:#3a3a44;transform:scaleX(1.0268);-webkit-text-stroke:0.4px currentColor">Overdue Opportunities(0)</div>
<div class="t" style="left:375.30px;top:367.53px;font-size:16.86px;font-weight:400;color:#50505a;transform:scaleX(0.7914);">0</div>
<div class="t" style="left:333.70px;top:397.85px;font-size:12.94px;font-weight:400;color:#7d8ca6;transform:scaleX(0.8563);">Complete Projects</div>
<div class="t" style="left:651.30px;top:367.53px;font-size:16.86px;font-weight:400;color:#50505a;transform:scaleX(0.7914);">0</div>
<div class="t" style="left:615.90px;top:397.85px;font-size:12.94px;font-weight:400;color:#7d8ca6;transform:scaleX(0.8422);">Complete Tasks</div>
<div class="t" style="left:909.00px;top:367.53px;font-size:16.86px;font-weight:400;color:#50505a;transform:scaleX(0.8540);">₦ 0.00</div>
<div class="t" style="left:878.40px;top:397.85px;font-size:12.94px;font-weight:400;color:#7d8ca6;transform:scaleX(0.8711);">Total Invoice Amount</div>
<div class="t" style="left:1203.30px;top:367.53px;font-size:16.86px;font-weight:400;color:#50505a;transform:scaleX(0.7914);">0</div>
<div class="t" style="left:1171.10px;top:397.85px;font-size:12.94px;font-weight:400;color:#7d8ca6;transform:scaleX(0.8593);">Total Estimate</div>
<div class="t" style="left:1479.30px;top:367.53px;font-size:16.86px;font-weight:400;color:#50505a;transform:scaleX(0.7914);">0</div>
<div class="t" style="left:1446.10px;top:397.85px;font-size:12.94px;font-weight:400;color:#7d8ca6;transform:scaleX(0.8175);">Resolved Bugs</div>
<div class="t" style="left:1755.30px;top:367.53px;font-size:16.86px;font-weight:400;color:#50505a;transform:scaleX(0.7914);">0</div>
<div class="t" style="left:1710.40px;top:397.85px;font-size:12.94px;font-weight:400;color:#7d8ca6;transform:scaleX(0.8785);">Won Opportunities</div>
<div class="b" style="left:240px;top:460px;width:813px;height:510px;background:#fff;box-shadow:0 0 16px rgba(0,0,0,.15)"></div>
<div class="t" style="left:256.20px;top:472.85px;font-size:14.83px;font-weight:400;color:#4f4f58;transform:scaleX(1.0235);-webkit-text-stroke:0.4px currentColor">Finance Overview</div>
<div class="b" style="left:773px;top:463px;width:220px;height:32px;background:#fff;border:1px solid #d3dde9;box-sizing:border-box"></div>
<div class="b" style="left:993px;top:463px;width:44px;height:33px;background:#eeeeee"></div>
<svg class="b" style="left:1006px;top:470px;" width="18" height="18" viewBox="0 0 18 18"><circle cx="7.6" cy="7.6" r="5" fill="none" stroke="#33334a" stroke-width="2.2"/><line x1="11.4" y1="11.4" x2="15" y2="15" stroke="#33334a" stroke-width="2.4" stroke-linecap="round"/></svg>
<div class="b" style="left:241px;top:499px;width:811px;height:2px;background:#1a8cff"></div>
<svg class="b" style="left:1044px;top:452px;" width="17" height="17" viewBox="0 0 17 17"><circle cx="8.2" cy="8" r="6.3" fill="#6ab0b0"/><path d="M5.6 5.4 L10.8 10.6 M10.8 5.4 L5.6 10.6" stroke="#fff" stroke-width="1.8"/></svg>
<div class="b" style="left:998px;top:502px;width:14px;height:14px;background:#fff;border:1px solid #c8c8c8;box-sizing:border-box"></div>
<div class="b" style="left:1000px;top:504px;width:10px;height:10px;background:#507cf7"></div>
<div class="b" style="left:998px;top:520px;width:14px;height:14px;background:#fff;border:1px solid #c8c8c8;box-sizing:border-box"></div>
<div class="b" style="left:1000px;top:522px;width:10px;height:10px;background:#00d8b0"></div>
<div class="t" style="left:1013.00px;top:503.15px;font-size:11.05px;font-weight:400;color:#555566;transform:scaleX(0.9070);">Expense</div>
<div class="t" style="left:1013.00px;top:521.15px;font-size:11.05px;font-weight:400;color:#555566;transform:scaleX(0.9655);">Income</div>
<div class="t" style="left:418.00px;top:523.08px;font-size:17.15px;font-weight:400;color:#363640;transform:scaleX(0.9241);">₦ 202,541,000.00</div>
<div class="t" style="left:624.60px;top:523.08px;font-size:17.15px;font-weight:400;color:#363640;transform:scaleX(0.9239);">₦ 35,325,000.00</div>
<div class="t" style="left:820.50px;top:523.08px;font-size:17.15px;font-weight:400;color:#363640;transform:scaleX(0.9384);">₦167,216,000.00</div>
<div class="t" style="left:426.90px;top:555.50px;font-size:12.65px;font-weight:400;color:#7d8ca6;transform:scaleX(0.8903);">Total Annual Income</div>
<div class="t" style="left:627.20px;top:555.50px;font-size:12.65px;font-weight:400;color:#7d8ca6;transform:scaleX(0.8697);">Total Annual Expense</div>
<div class="t" style="left:837.20px;top:555.50px;font-size:12.65px;font-weight:400;color:#7d8ca6;transform:scaleX(0.8965);">Total Annual Profit</div>
<svg class="b" style="left:0;top:0" width="1920" height="972" viewBox="0 0 1920 972"><defs><clipPath id="chc"><rect x="241" y="560" width="811" height="410"/></clipPath></defs><g clip-path="url(#chc)"><line x1="262.5" y1="577" x2="262.5" y2="935.5" stroke="#e8e8e8" stroke-width="1"/><line x1="331.5" y1="577" x2="331.5" y2="935.5" stroke="#e8e8e8" stroke-width="1"/><line x1="400.5" y1="577" x2="400.5" y2="935.5" stroke="#e8e8e8" stroke-width="1"/><line x1="469.5" y1="577" x2="469.5" y2="935.5" stroke="#e8e8e8" stroke-width="1"/><line x1="538.5" y1="577" x2="538.5" y2="935.5" stroke="#e8e8e8" stroke-width="1"/><line x1="607.5" y1="577" x2="607.5" y2="935.5" stroke="#e8e8e8" stroke-width="1"/><line x1="676.5" y1="577" x2="676.5" y2="935.5" stroke="#e8e8e8" stroke-width="1"/><line x1="745.5" y1="577" x2="745.5" y2="935.5" stroke="#e8e8e8" stroke-width="1"/><line x1="814.5" y1="577" x2="814.5" y2="935.5" stroke="#e8e8e8" stroke-width="1"/><line x1="883.5" y1="577" x2="883.5" y2="935.5" stroke="#e8e8e8" stroke-width="1"/><line x1="952.5" y1="577" x2="952.5" y2="935.5" stroke="#e8e8e8" stroke-width="1"/><line x1="1021.5" y1="577" x2="1021.5" y2="935.5" stroke="#e8e8e8" stroke-width="1"/><line x1="257" y1="582.5" x2="1050" y2="582.5" stroke="#e8e8e8" stroke-width="1"/><polyline points="262,924 331,900 400,895 469,905 538,905 607,905 676,883 745,884.5 814,886 883,891 951,896 1021,870 1050,859" fill="none" stroke="#5080f6" stroke-width="3.4" stroke-linejoin="round" stroke-linecap="round"/><polyline points="262,934 331,923 400,913 469,876 538,883 607,817 676,768 745,776 812,783 883,680 951,635 1020,623 1050,591" fill="none" stroke="#00dbb4" stroke-width="6" stroke-linejoin="round" stroke-linecap="round"/><line x1="266.5" y1="940" x2="327.5" y2="940" stroke="#00f2d2" stroke-width="2"/><line x1="335.5" y1="940" x2="396.5" y2="940" stroke="#00f2d2" stroke-width="2"/><line x1="404.5" y1="940" x2="465.5" y2="940" stroke="#00f2d2" stroke-width="2"/><line x1="473.5" y1="940" x2="534.5" y2="940" stroke="#00f2d2" stroke-width="2"/><line x1="542.5" y1="940" x2="603.5" y2="940" stroke="#00f2d2" stroke-width="2"/><line x1="611.5" y1="940" x2="672.5" y2="940" stroke="#00f2d2" stroke-width="2"/><line x1="680.5" y1="940" x2="741.5" y2="940" stroke="#00f2d2" stroke-width="2"/><line x1="749.5" y1="940" x2="810.5" y2="940" stroke="#00f2d2" stroke-width="2"/><line x1="818.5" y1="940" x2="879.5" y2="940" stroke="#00f2d2" stroke-width="2"/><line x1="887.5" y1="940" x2="948.5" y2="940" stroke="#00f2d2" stroke-width="2"/><line x1="956.5" y1="940" x2="1017.5" y2="940" stroke="#00f2d2" stroke-width="2"/><line x1="1025" y1="940.5" x2="1052" y2="940.5" stroke="#e2e2e2" stroke-width="1"/><circle cx="262.5" cy="940" r="2.2" fill="#1cd8ba"/><circle cx="331.5" cy="940" r="2.2" fill="#1cd8ba"/><circle cx="400.5" cy="940" r="2.2" fill="#1cd8ba"/><circle cx="469.5" cy="940" r="2.2" fill="#1cd8ba"/><circle cx="538.5" cy="940" r="2.2" fill="#1cd8ba"/><circle cx="607.5" cy="940" r="2.2" fill="#1cd8ba"/><circle cx="676.5" cy="940" r="2.2" fill="#1cd8ba"/><circle cx="745.5" cy="940" r="2.2" fill="#1cd8ba"/><circle cx="814.5" cy="940" r="2.2" fill="#1cd8ba"/><circle cx="883.5" cy="940" r="2.2" fill="#1cd8ba"/><circle cx="952.5" cy="940" r="2.2" fill="#1cd8ba"/><circle cx="1021.5" cy="940" r="2.2" fill="#1cd8ba"/></g></svg>
<div class="t" style="left:246.50px;top:576.42px;font-size:12.50px;font-weight:400;color:#666670;transform:scaleX(0.5755);">1</div>
<div class="t" style="left:245.80px;top:931.92px;font-size:12.50px;font-weight:400;color:#666670;transform:scaleX(0.8201);">0</div>
<div class="t" style="left:241.80px;top:946.50px;font-size:12.65px;font-weight:400;color:#66666e;transform:scaleX(0.9200);">January</div>
<div class="t" style="left:308.22px;top:946.50px;font-size:12.65px;font-weight:400;color:#66666e;transform:scaleX(0.9200);">February</div>
<div class="t" style="left:384.33px;top:946.50px;font-size:12.65px;font-weight:400;color:#66666e;transform:scaleX(0.9200);">March</div>
<div class="t" style="left:457.86px;top:946.50px;font-size:12.65px;font-weight:400;color:#66666e;transform:scaleX(0.9200);">April</div>
<div class="t" style="left:527.51px;top:946.50px;font-size:12.65px;font-weight:400;color:#66666e;transform:scaleX(0.9200);">May</div>
<div class="t" style="left:594.87px;top:946.50px;font-size:12.65px;font-weight:400;color:#66666e;transform:scaleX(0.9200);">June</div>
<div class="t" style="left:666.15px;top:946.50px;font-size:12.65px;font-weight:400;color:#66666e;transform:scaleX(0.9200);">July</div>
<div class="t" style="left:727.38px;top:946.50px;font-size:12.65px;font-weight:400;color:#66666e;transform:scaleX(0.9200);">August</div>
<div class="t" style="left:786.03px;top:946.50px;font-size:12.65px;font-weight:400;color:#66666e;transform:scaleX(0.9200);">September</div>
<div class="t" style="left:862.80px;top:946.50px;font-size:12.65px;font-weight:400;color:#66666e;transform:scaleX(0.9200);">October</div>
<div class="t" style="left:925.66px;top:946.50px;font-size:12.65px;font-weight:400;color:#66666e;transform:scaleX(0.9200);">November</div>
<div class="t" style="left:994.66px;top:946.50px;font-size:12.65px;font-weight:400;color:#66666e;transform:scaleX(0.9200);">December</div>
<div class="b" style="left:1083px;top:460px;width:813px;height:437px;background:#fff;box-shadow:0 0 16px rgba(0,0,0,.15)"></div>
<div class="t" style="left:1099.20px;top:472.73px;font-size:14.97px;font-weight:400;color:#4f4f58;transform:scaleX(1.0337);-webkit-text-stroke:0.4px currentColor">Recent Activities</div>
<div class="b" style="left:1083px;top:499px;width:808px;height:2px;background:#1a8cff"></div>
<div class="b" style="left:1891px;top:461px;width:4px;height:436px;background:#e8e8e8"></div>
<div class="b" style="left:1891px;top:461px;width:4px;height:273px;background:#0050b4"></div>
<svg class="b" style="left:1116px;top:525px;" width="32" height="32" viewBox="0 0 32 32"><defs><clipPath id="av3"><circle cx="16" cy="15.5" r="14.5"/></clipPath></defs><g clip-path="url(#av3)"><g transform="translate(-4.16,-1.01) scale(0.63,0.47)"><defs><radialGradient id="bgav3" cx="30%" cy="35%" r="75%"><stop offset="0" stop-color="#3e3b42"/><stop offset="1" stop-color="#1c1b20"/></radialGradient>
<radialGradient id="face3" cx="45%" cy="45%" r="60%"><stop offset="0" stop-color="#e4bc8c"/><stop offset="1" stop-color="#b08a5a"/></radialGradient>
<filter id="bl3" x="-10%" y="-10%" width="120%" height="120%"><feGaussianBlur stdDeviation="0.55"/></filter></defs>
<g filter="url(#bl3)">
<rect x="0" y="0" width="64" height="78" fill="url(#bgav3)"/>
<path d="M24 44 L40 44 L41 56 L23 56 Z" fill="#b07c60"/>
<path d="M0 78 C2 60 12 53 24 50 L32 60 L40 50 C52 53 62 60 64 78 Z" fill="#191a26"/>
<path d="M25 51 L32 62 L39 51 L41 78 L23 78 Z" fill="#16207a"/>
<ellipse cx="32" cy="36.5" rx="12" ry="14.8" fill="url(#face3)"/>
<path d="M19 37 C17 22 24 15 32.5 15 C41.5 15 47 22 45.5 36 C44.5 29 42 26 38 24.4 C33 23.6 27 24.4 23 27 C21 29 19.8 32 19 37 Z" fill="#76683a"/>
<ellipse cx="27.6" cy="35" rx="1.6" ry="0.9" fill="#5a4a44"/><ellipse cx="36.6" cy="35" rx="1.6" ry="0.9" fill="#5a4a44"/>
<path d="M28 44 Q32 46 36 44" stroke="#9a5a4a" stroke-width="1" fill="none"/>
</g></g></g></svg>
<div class="t" style="left:1147.50px;top:528.78px;font-size:11.48px;font-weight:700;color:#3a3a4c;transform:scaleX(0.8212);">Yemi Test</div>
<div class="t" style="left:1194.00px;top:528.78px;font-size:11.48px;font-weight:400;color:#8f9bb3;transform:scaleX(0.8837);">14 minutes ago</div>
<div class="t" style="left:1147.50px;top:545.68px;font-size:11.48px;font-weight:400;color:#4a4a5c;transform:scaleX(0.8748);">Update Theme Settings</div>
<div class="t" style="left:1256.50px;top:545.68px;font-size:11.48px;font-weight:700;color:#3a3a4c;transform:scaleX(0.8252);">Pub X</div>
<div class="b" style="left:1099px;top:581px;width:777px;height:1px;background:#dde7f0"></div>
<div class="b" style="left:1099px;top:657px;width:777px;height:1px;background:#dde7f0"></div>
<div class="b" style="left:1099px;top:734px;width:777px;height:1px;background:#dde7f0"></div>
<div class="b" style="left:1099px;top:810px;width:777px;height:1px;background:#dde7f0"></div>
<div class="b" style="left:1099px;top:887px;width:777px;height:1px;background:#dde7f0"></div>
<div class="b" style="left:1083px;top:933px;width:813px;height:39px;background:#fff;box-shadow:0 0 16px rgba(0,0,0,.15)"></div>
<div class="b" style="left:1891px;top:933px;width:4px;height:39px;background:#e8e8e8"></div>
<div class="t" style="left:1099.00px;top:944.04px;font-size:16.13px;font-weight:400;color:#5f5f66;transform:scaleX(0.9104);-webkit-text-stroke:0.4px currentColor">My Tasks</div>
<div class="b" style="left:1846px;top:893px;width:60px;height:42px;background:#0a88ff"></div>
<svg class="b" style="left:1860px;top:902px;" width="34" height="26" viewBox="0 0 34 26"><path d="M12.5 2 C6.4 2 2 5.3 2 9.4 C2 11.8 3.4 13.8 5.8 15.2 C5.5 17 4.6 18.4 3.4 19.6 C6 19.4 8.2 18.4 9.6 17 C10.6 17.2 11.5 17.2 12.5 17.2 C18.6 17.2 23 13.8 23 9.4 C23 5.3 18.6 2 12.5 2 Z" fill="#fff"/><path d="M25 7.6 C28.8 9 31.2 11.4 31.2 14.4 C31.2 16.8 29.6 18.8 27.2 20 C27.4 21.4 28.2 22.6 29.2 23.6 C27 23.4 25 22.6 23.8 21.4 C23 21.6 22.2 21.6 21.4 21.6 C18.2 21.6 15.4 20.6 13.8 19 C20.6 18.8 25.6 14.8 25.6 9.6 C25.6 8.9 25.4 8.2 25 7.6 Z" fill="#fff"/></svg>
<svg class="b" style="left:99px;top:49px;" width="10" height="6" viewBox="0 0 10 6"><path d="M2 3.8 C3 3.4 3.6 2.6 4.4 1.8 C5.4 1.2 6.4 1.6 7 2" stroke="#f2e000" stroke-width="1.3" fill="none" stroke-linecap="round"/></svg>
<div class="b" style="left:1916px;top:0px;width:4px;height:972px;background:#d6d6d6"></div>
<div class="b" style="left:1916px;top:0px;width:4px;height:243px;background:#0050b8"></div>
</body></html>
